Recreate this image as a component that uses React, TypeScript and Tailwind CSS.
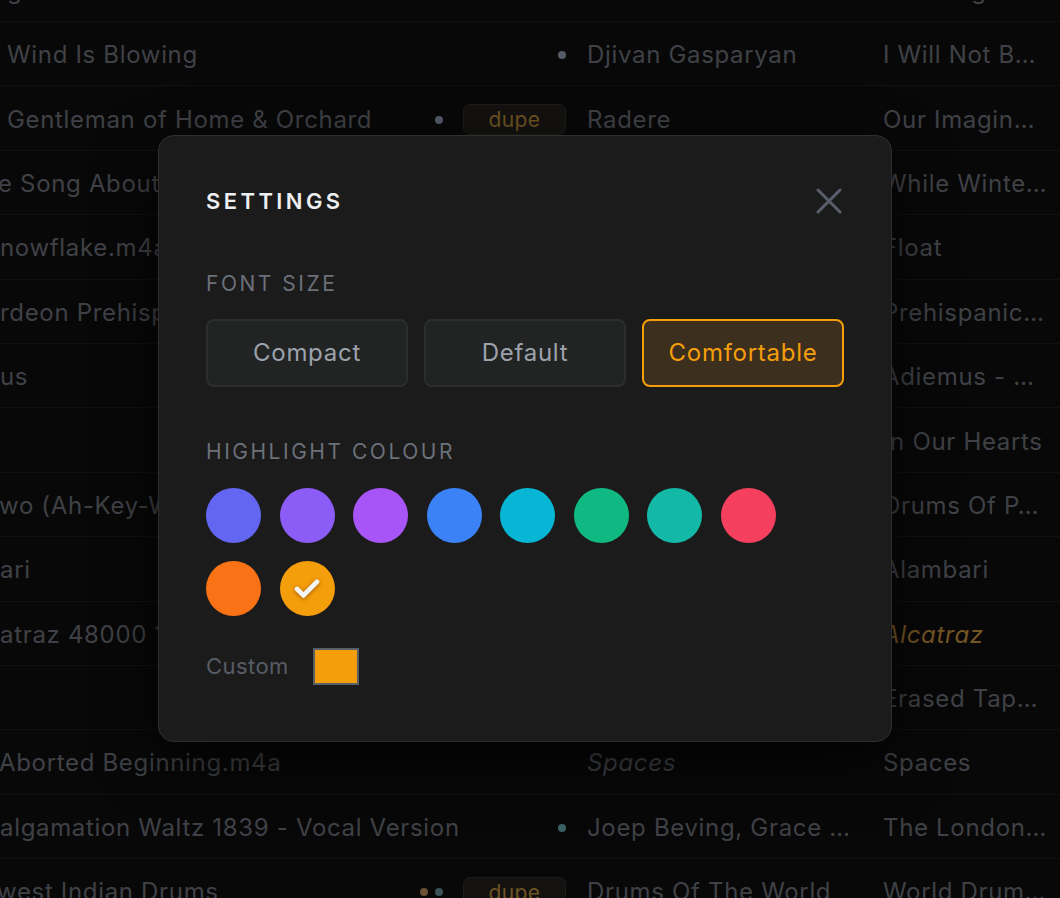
import React from "react";

type Row = {
  title: string;
  shift: string;
  dots: string[];
  dupe?: boolean;
  artist: string;
  artistItalic?: boolean;
  album: string;
  albumClass?: string;
};

const rows: Row[] = [
  { title: "gentle rain", shift: "", dots: [], artist: "", album: "Amazing Grace" },
  { title: "Wind Is Blowing", shift: "", dots: ["bg-[#a6b8cc]"], artist: "Djivan Gasparyan", album: "I Will Not B…" },
  { title: "Gentleman of Home & Orchard", shift: "", dots: ["bg-[#a6b8cc]"], dupe: true, artist: "Radere", album: "Our Imagin…" },
  { title: "e Song About a Snowflake", shift: "-ml-[9px]", dots: [], artist: "Hania Rani", album: "While Winte…" },
  { title: "nowflake.m4a", shift: "-ml-[7px]", dots: [], artist: "Unknown", album: "Float" },
  { title: "rdeon Prehispanico", shift: "-ml-[7px]", dots: [], artist: "Tribu", album: "Prehispanic…" },
  { title: "us", shift: "-ml-[7px]", dots: [], artist: "Karl Jenkins", album: "Adiemus - …" },
  { title: "", shift: "", dots: [], artist: "Ólafur Arnalds", album: "In Our Hearts" },
  { title: "wo (Ah-Key-Wa-Wo)", shift: "-ml-[8px]", dots: [], artist: "Drums", album: "Drums Of P…" },
  { title: "ari", shift: "-ml-[7px]", dots: [], artist: "Alambari", album: "Alambari" },
  { title: "atraz 48000 1", shift: "-ml-[7px]", dots: [], artist: "Alcatraz", album: "Alcatraz", albumClass: "italic text-[#e8ab48]" },
  { title: "", shift: "", dots: [], artist: "Erased Tapes", album: "Erased Tap…" },
  { title: "Aborted Beginning.m4a", shift: "-ml-[8px]", dots: [], artist: "Spaces", artistItalic: true, album: "Spaces" },
  { title: "algamation Waltz 1839 - Vocal Version", shift: "-ml-[7px]", dots: ["bg-[#78c4cc]"], artist: "Joep Beving, Grace …", album: "The London…" },
  { title: "west Indian Drums", shift: "-ml-[10px]", dots: ["bg-[#d2a46c]", "bg-[#78a4b0]"], dupe: true, artist: "Drums Of The World", album: "World Drum…" },
];

const swatches = [
  "bg-[#6366f1]",
  "bg-[#8b5cf6]",
  "bg-[#a855f7]",
  "bg-[#3b82f6]",
  "bg-[#06b6d4]",
  "bg-[#10b981]",
  "bg-[#14b8a6]",
  "bg-[#f43f5e]",
  "bg-[#f97316]",
  "bg-[#f59e0b]",
];

function TrackRow({ row }: { row: Row }) {
  return (
    <div className="flex h-[64.4px] items-center border-b border-[#222222] pt-[3px] text-[24px] tracking-[0.028em] text-[#7e838c]">
      <div className="flex w-[566px] flex-none items-center">
        <div className="min-w-0 flex-1 overflow-hidden whitespace-nowrap pl-[7px]">
          <div className={row.shift}>{row.title}</div>
        </div>
        <div className="flex flex-none items-center gap-[20px]">
          {row.dots.length > 0 && (
            <div className="flex items-center gap-[7px]">
              {row.dots.map((d, i) => (
                <span key={i} className={`block h-[8px] w-[8px] rounded-full ${d}`} />
              ))}
            </div>
          )}
          {row.dupe && (
            <span className="flex h-[31px] w-[103px] items-center justify-center rounded-[7px] border border-[#3a3833] bg-[#262420] text-[21px] tracking-[0.02em] text-[#dca444]">
              dupe
            </span>
          )}
        </div>
      </div>
      <div className={`w-[317px] flex-none overflow-hidden whitespace-nowrap pl-[21px] ${row.artistItalic ? "italic" : ""}`}>
        {row.artist}
      </div>
      <div className={`min-w-0 flex-1 overflow-hidden whitespace-nowrap ${row.albumClass ?? ""}`}>{row.album}</div>
    </div>
  );
}

function SettingsDialog() {
  const sizes = ["Compact", "Default", "Comfortable"];
  const active = "Comfortable";
  return (
    <div className="w-[734px] rounded-[16px] border border-[#2f2f2f] bg-[#1b1b1b] px-[47px] pb-[55px] pt-[47px] shadow-[0_20px_60px_rgba(0,0,0,0.7)]">
      <div className="flex h-[36px] items-center justify-between">
        <h2 className="text-[22px] font-semibold tracking-[0.155em] text-[#eceef0]">SETTINGS</h2>
        <button className="mr-[2px] text-[#5a5f6c]">
          <svg width="26" height="26" viewBox="0 0 26 26" fill="none" stroke="currentColor" strokeWidth="3" strokeLinecap="round">
            <path d="M2 2 24 24M24 2 2 24" />
          </svg>
        </button>
      </div>

      <div className="mt-[53px] text-[21px] leading-[24px] tracking-[0.12em] text-[#6b7079]">FONT SIZE</div>
      <div className="mt-[23px] flex gap-4">
        {sizes.map((s) =>
          s === active ? (
            <button
              key={s}
              className="flex h-[68px] w-[202px] items-center justify-center rounded-[8px] border-2 border-[#f59e0b] bg-[#3d2f1d] text-[24px] tracking-[0.03em] text-[#f59e0b]"
            >
              {s}
            </button>
          ) : (
            <button
              key={s}
              className="flex h-[68px] w-[202px] items-center justify-center rounded-[8px] border-2 border-[#2b2e2e] bg-[#222424] text-[24px] tracking-[0.03em] text-[#9ca2ac]"
            >
              {s}
            </button>
          )
        )}
      </div>

      <div className="mt-[53px] text-[21px] leading-[24px] tracking-[0.12em] text-[#6b7079]">HIGHLIGHT COLOUR</div>
      <div className="mt-[24px] flex flex-wrap gap-x-[18.5px] gap-y-[18px]">
        {swatches.map((c, i) => (
          <button key={c} className={`flex h-[55px] w-[55px] items-center justify-center rounded-full ${c}`}>
            {i === swatches.length - 1 && (
              <svg
                width="34"
                height="34"
                viewBox="0 0 24 24"
                fill="none"
                stroke="#f3f4f6"
                strokeWidth="3.4"
                strokeLinecap="round"
                strokeLinejoin="round"
                className="drop-shadow-[0_1px_2px_rgba(120,60,0,0.7)]"
              >
                <path d="M19 7 9.5 16.5 5 12" />
              </svg>
            )}
          </button>
        ))}
      </div>

      <div className="mt-[30px] flex h-[40px] items-center gap-[24px]">
        <span className="text-[22px] tracking-[0.02em] text-[#575c66]">Custom</span>
        <span className="block h-[37px] w-[46px] border-2 border-[#5a5e66] bg-[#f59e0b]" />
      </div>
    </div>
  );
}

export default function App() {
  return (
    <div className="relative h-[898px] w-full overflow-hidden bg-[#101010] font-['Inter','Liberation_Sans',sans-serif]">
      <div className="-mt-[42.4px]">
        {rows.map((r, i) => (
          <TrackRow key={i} row={r} />
        ))}
      </div>
      <div className="absolute inset-0 bg-black/50" />
      <div className="absolute left-[158px] top-[135px]">
        <SettingsDialog />
      </div>
    </div>
  );
}
